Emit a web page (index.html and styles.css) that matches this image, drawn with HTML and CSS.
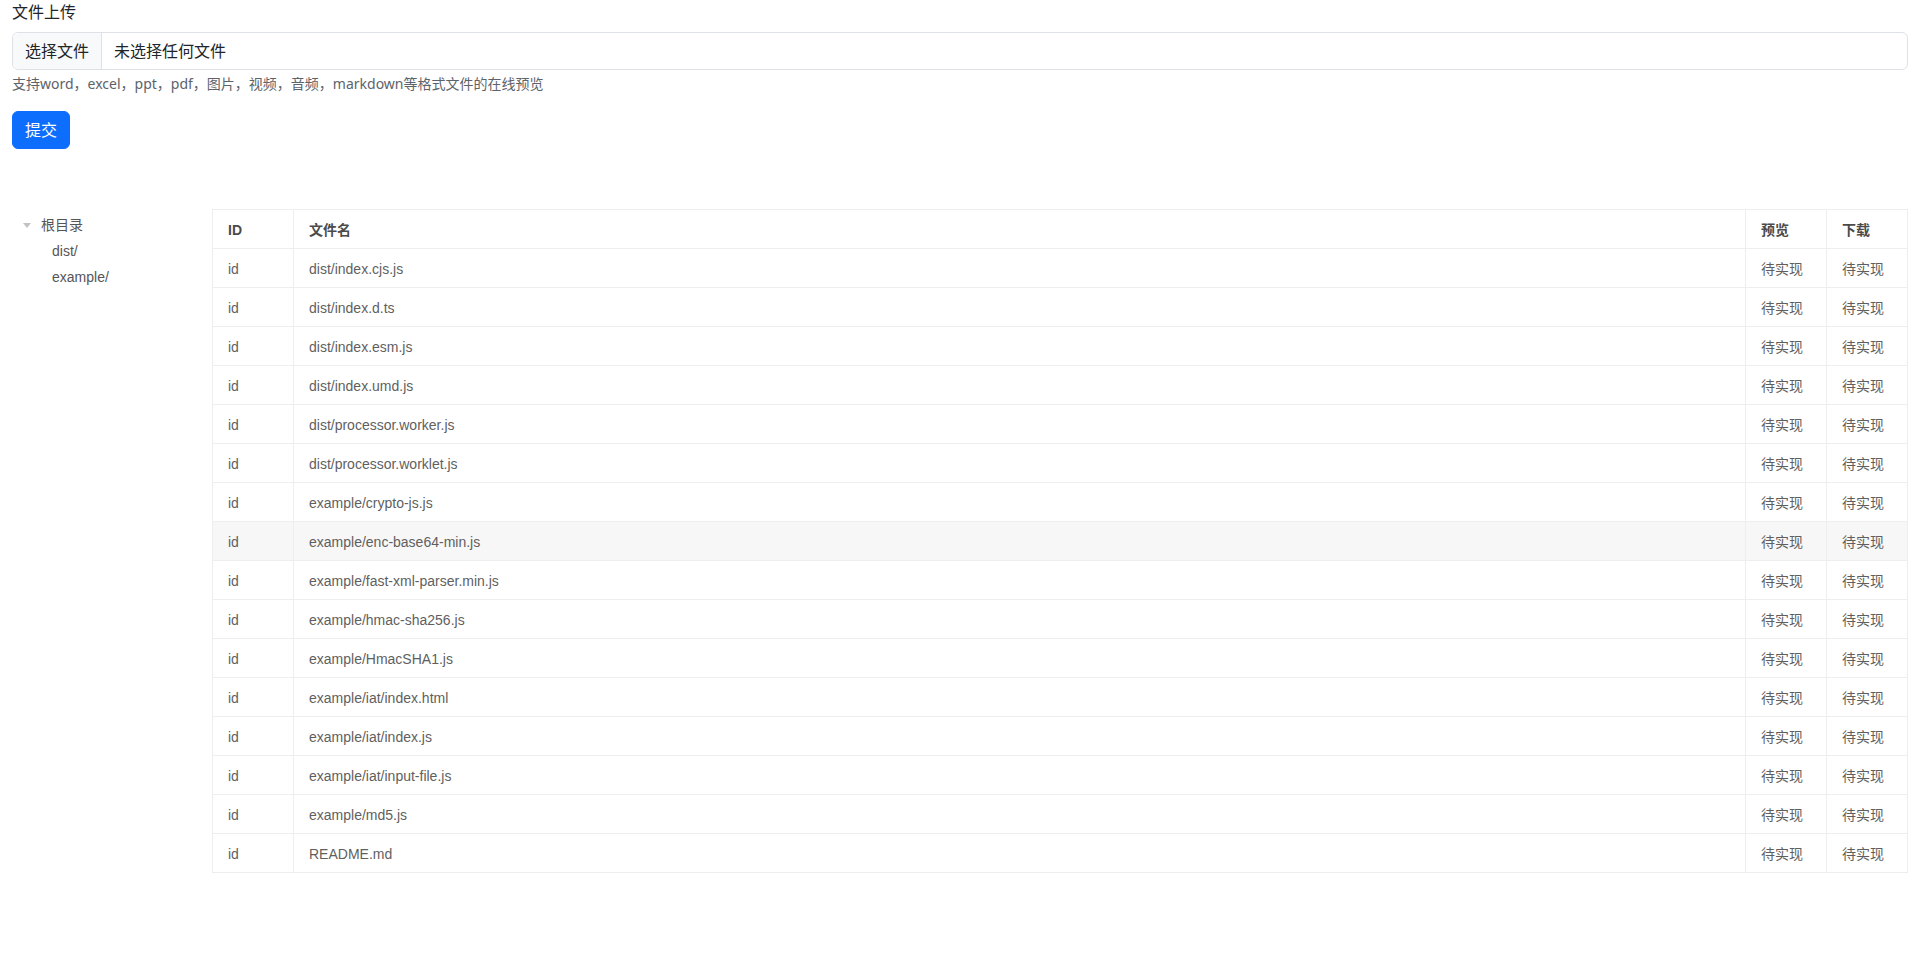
FILE: index.html
```html
<!DOCTYPE html>
<html lang="zh-CN">
<head>
    <meta charset="UTF-8">
    <meta name="viewport" content="width=device-width, initial-scale=1.0">
    <title>文件上传</title>
    <link rel="stylesheet" href="styles.css">
</head>
<body>
    <div class="page">
        <form class="upload-form">
            <label class="form-label" for="file">文件上传</label>
            <label class="file-input">
                <input type="file" id="file" name="file">
                <span class="file-btn">选择文件</span>
                <span class="file-name">未选择任何文件</span>
            </label>
            <div class="form-text">支持word，excel，ppt，pdf，图片，视频，音频，markdown等格式文件的在线预览</div>
            <button type="button" class="btn-submit">提交</button>
        </form>

        <div class="file-layout">
            <div class="tree">
                <div class="tree-entry">
                    <span class="tree-arrow"></span>
                    <span class="tree-txt">根目录</span>
                </div>
                <div class="tree-pack">
                    <div class="tree-entry"><span class="tree-txt">dist/</span></div>
                    <div class="tree-entry"><span class="tree-txt">example/</span></div>
                </div>
            </div>

            <div class="table-wrap">
                <table class="file-table">
                    <thead>
                        <tr>
                            <th class="col-id">ID</th>
                            <th>文件名</th>
                            <th class="col-op">预览</th>
                            <th class="col-op">下载</th>
                        </tr>
                    </thead>
                    <tbody id="fileList"></tbody>
                </table>
            </div>
        </div>
    </div>

    <script>
        const files = [
            'dist/index.cjs.js',
            'dist/index.d.ts',
            'dist/index.esm.js',
            'dist/index.umd.js',
            'dist/processor.worker.js',
            'dist/processor.worklet.js',
            'example/crypto-js.js',
            'example/enc-base64-min.js',
            'example/fast-xml-parser.min.js',
            'example/hmac-sha256.js',
            'example/HmacSHA1.js',
            'example/iat/index.html',
            'example/iat/index.js',
            'example/iat/input-file.js',
            'example/md5.js',
            'README.md'
        ];

        // Fill the table rows
        const tbody = document.getElementById('fileList');
        tbody.innerHTML = files.map((name, i) => `
            <tr${i === 7 ? ' class="is-hover"' : ''}>
                <td>id</td>
                <td>${name}</td>
                <td>待实现</td>
                <td>待实现</td>
            </tr>
        `).join('');
    </script>
</body>
</html>
```

FILE: styles.css
```css
* {
    box-sizing: border-box;
}
body {
    margin: 0;
    font-family: "Liberation Sans", Arial, "Noto Sans CJK SC", sans-serif;
    font-size: 16px;
    line-height: 1.5;
    color: #212529;
    background: #fff;
}
.page {
    padding: 0 12px;
}

/* upload form */
.upload-form {
    font-family: "Noto Sans", "Noto Sans CJK SC", sans-serif;
}
.form-label {
    display: block;
    margin-bottom: 8px;
}
.file-input {
    display: flex;
    height: 38px;
    border: 1px solid #dee2e6;
    border-radius: 6px;
    overflow: hidden;
    cursor: pointer;
    line-height: 24px;
}
.file-input input {
    display: none;
}
.file-btn {
    padding: 6px 12px;
    background: #f8f9fa;
    border-right: 1px solid #dee2e6;
}
.file-name {
    padding: 6px 12px;
}
.form-text {
    margin-top: 3px;
    font-size: 14px;
    color: #5c636a;
}
.btn-submit {
    margin-top: 17px;
    height: 38px;
    padding: 6px 12px;
    font: inherit;
    line-height: 24px;
    color: #fff;
    background: #0d6efd;
    border: 1px solid #0d6efd;
    border-radius: 6px;
}

/* tree + table */
.file-layout {
    display: flex;
    margin-top: 60px;
}
.tree {
    width: 200px;
    flex-shrink: 0;
    padding-top: 3px;
    font-size: 14px;
    color: #555;
}
.tree-entry {
    display: flex;
    align-items: center;
    height: 26px;
    padding: 3px 0;
    line-height: 20px;
}
.tree-arrow {
    width: 0;
    height: 0;
    margin: 0 10px 0 11px;
    border-left: 4px solid transparent;
    border-right: 4px solid transparent;
    border-top: 5px solid #c2c2c2;
}
.tree-pack .tree-entry {
    padding-left: 40px;
}
.table-wrap {
    flex: 1;
}
.file-table {
    width: 100%;
    border-collapse: collapse;
    font-size: 14px;
    line-height: 20px;
    color: #5f5f5f;
    border: 1px solid #eee;
}
.file-table th,
.file-table td {
    padding: 10px 15px 8px;
    border: 1px solid #eee;
    text-align: left;
}
.file-table th {
    font-weight: 700;
    color: #4b4b4b;
}
.col-id,
.col-op {
    width: 81px;
}
.file-table tbody tr.is-hover {
    background: #f7f7f7;
}
```
